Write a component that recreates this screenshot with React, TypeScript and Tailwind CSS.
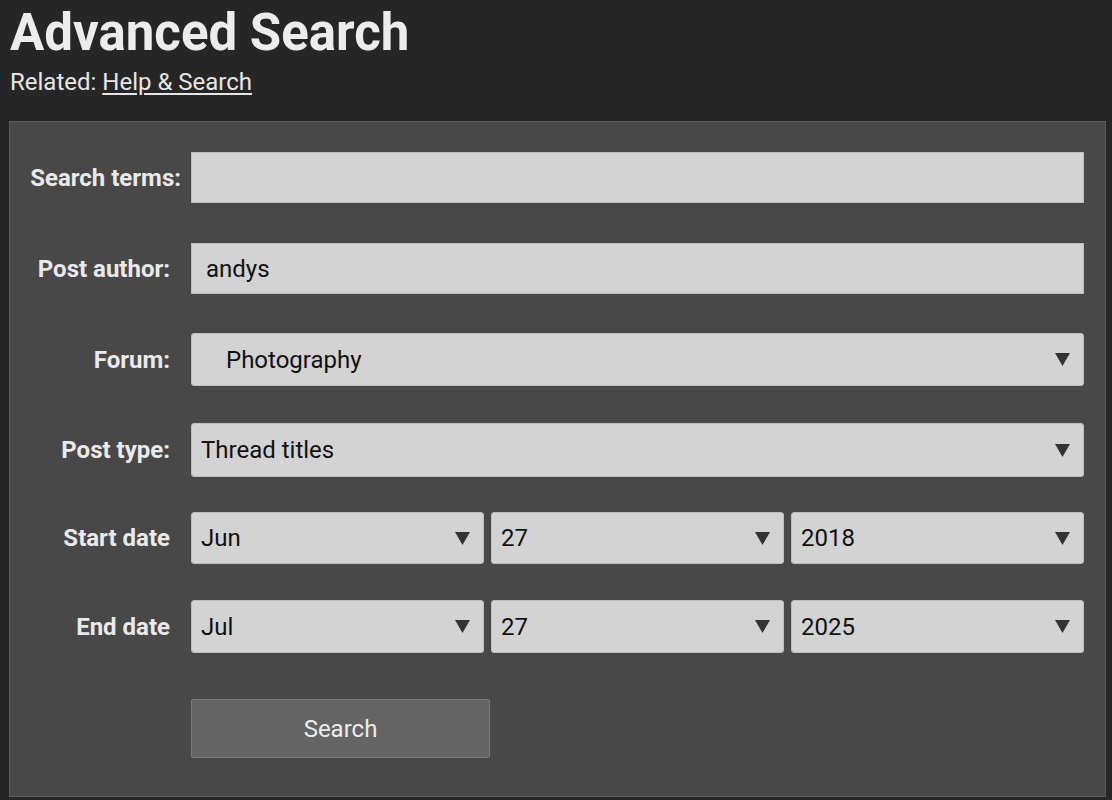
import React from "react"

const font = { fontFamily: "Roboto, 'Noto Sans', sans-serif" }

function Arrow() {
  return (
    <svg width="15" height="13" viewBox="0 0 15 13" className="shrink-0">
      <path d="M0 0 H15 L7.5 13 Z" fill="#333333" />
    </svg>
  )
}

function Select({ value, className = "", textClass = "pl-[9px]" }: { value: string; className?: string; textClass?: string }) {
  return (
    <div
      className={`flex items-center justify-between rounded-[3px] bg-[#d3d3d3] border border-[#bdbdbd] pr-[13px] text-[24px] text-[#111] h-full ${textClass} ${className}`}
    >
      <span>{value}</span>
      <Arrow />
    </div>
  )
}

function Row({ label, top, h, labelPad = "pr-[11px]", children }: { label: string; top: string; h: string; labelPad?: string; children: React.ReactNode }) {
  return (
    <div className={`flex items-center ${top} ${h}`}>
      <div className={`w-[171px] shrink-0 text-right text-[24px] font-bold text-[#eaeaea] whitespace-nowrap ${labelPad}`}>
        {label}
      </div>
      <div className="ml-[10px] w-[893px] h-full">{children}</div>
    </div>
  )
}

export default function App() {
  return (
    <div className="min-h-[800px] w-[1112px] bg-[#262626]" style={font}>
      {/* Header */}
      <div className="px-[10px] pt-[3px]">
        <h1 className="text-[51px] font-bold leading-[60px] text-[#ececec]">Advanced Search</h1>
        <p className="mt-[5px] text-[24px] leading-[28px] text-[#e6e6e6]">
          Related: <a className="underline underline-offset-[3px]">Help &amp; Search</a>
        </p>
      </div>

      {/* Form panel */}
      <div className="mx-[9px] mt-[25px] h-[676px] w-[1097px] border border-[#5c5c5c] bg-[#484848]">
        <Row label="Search terms:" top="mt-[30px]" h="h-[51px]" labelPad="pr-0">
          <div className="h-full border border-[#bdbdbd] bg-[#d3d3d3]" />
        </Row>
        <Row label="Post author:" top="mt-[40px]" h="h-[51px]">
          <div className="flex h-full items-center border border-[#bdbdbd] bg-[#d3d3d3] pl-[14px] text-[24px] text-[#111]">andys</div>
        </Row>
        <Row label="Forum:" top="mt-[39px]" h="h-[53px]">
          <Select value="Photography" textClass="pl-[34px]" />
        </Row>
        <Row label="Post type:" top="mt-[37px]" h="h-[54px]">
          <Select value="Thread titles" />
        </Row>
        <Row label="Start date" top="mt-[35px]" h="h-[52px]">
          <div className="flex h-full gap-[7px]">
            <Select value="Jun" className="flex-1" />
            <Select value="27" className="flex-1" />
            <Select value="2018" className="flex-1" />
          </div>
        </Row>
        <Row label="End date" top="mt-[36px]" h="h-[53px]">
          <div className="flex h-full gap-[7px]">
            <Select value="Jul" className="flex-1" />
            <Select value="27" className="flex-1" />
            <Select value="2025" className="flex-1" />
          </div>
        </Row>
        <div className="mt-[46px] ml-[181px]">
          <button className="h-[59px] w-[299px] rounded-[2px] border border-[#7a7a7a] bg-[#646464] text-[24px] text-[#ececec]">
            Search
          </button>
        </div>
      </div>
    </div>
  )
}
